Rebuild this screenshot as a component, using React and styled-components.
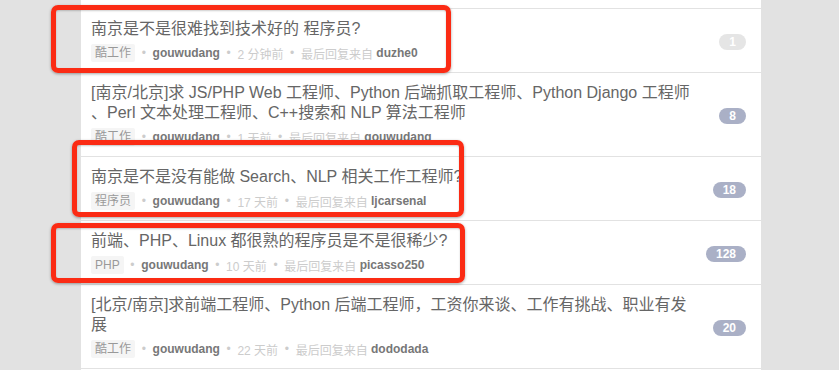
import React from "react";
import styled, { createGlobalStyle } from "styled-components";

const Global = createGlobalStyle`
  html, body { margin: 0; padding: 0; background: #e2e2e2; }
  body { font-family: "Liberation Sans", "Noto Sans CJK SC", sans-serif; }
`;

const Page = styled.div`
  position: relative;
  width: 839px;
  height: 370px;
  overflow: hidden;
  background: #e2e2e2;
`;

const Main = styled.div`
  margin-left: 81px;
  width: 680px;
  min-height: 370px;
  background: #fff;
`;

const Spacer = styled.div`
  height: 8px;
  border-bottom: 1px solid #e2e2e2;
`;

const Cell = styled.div`
  display: grid;
  grid-template-columns: 610px 1fr;
  align-items: center;
  padding: 10px;
  border-bottom: 1px solid #e2e2e2;
`;

const Body = styled.div`
  display: flex;
  flex-direction: column;
  gap: 5px;
`;

const Title = styled.div`
  font-size: 16px;
  line-height: 20px;
  color: #666;
  line-break: anywhere;
`;

const Meta = styled.div`
  display: flex;
  align-items: center;
  height: 18px;
  font-size: 12px;
  color: #ccc;
  white-space: nowrap;
`;

const Tag = styled.span`
  display: inline-block;
  font-size: 12px;
  line-height: 12px;
  padding: 3px 4px;
  background: #f5f5f5;
  color: #999;
  border-radius: 2px;
`;

const Dot = styled.span`
  color: #ccc;
`;

const User = styled.strong`
  font-weight: bold;
  color: #777;
`;

const Light = styled.span`
  color: #ccc;
`;

const CountCol = styled.div`
  justify-self: end;
  margin-right: 5px;
`;

const Count = styled.span`
  display: inline-block;
  padding: 2px 10px;
  line-height: 12px;
  font-size: 12px;
  font-weight: bold;
  color: #fff;
  background: ${(p) => (p.$read ? "#e5e5e5" : "#aab0c6")};
  border-radius: 12px;
`;

const Mark = styled.div`
  position: absolute;
  left: ${(p) => p.$x}px;
  top: ${(p) => p.$y}px;
  width: ${(p) => p.$w}px;
  height: ${(p) => p.$h}px;
  box-sizing: border-box;
  border: 5px solid #fb2b14;
  border-radius: 7px;
  box-shadow: 0 1px 3px rgba(0, 0, 0, 0.35), inset 0 1px 2px rgba(0, 0, 0, 0.2);
  pointer-events: none;
`;

const topics = [
  {
    title: "南京是不是很难找到技术好的 程序员?",
    node: "酷工作",
    time: "2 分钟前",
    last: "duzhe0",
    count: 1,
    read: true,
  },
  {
    title:
      "[南京/北京]求 JS/PHP Web 工程师、Python 后端抓取工程师、Python Django 工程师、Perl 文本处理工程师、C++搜索和 NLP 算法工程师",
    node: "酷工作",
    time: "1 天前",
    last: "gouwudang",
    count: 8,
  },
  {
    title: "南京是不是没有能做 Search、NLP 相关工作工程师?",
    node: "程序员",
    time: "17 天前",
    last: "ljcarsenal",
    count: 18,
  },
  {
    title: "前端、PHP、Linux 都很熟的程序员是不是很稀少?",
    node: "PHP",
    time: "10 天前",
    last: "picasso250",
    count: 128,
  },
  {
    title:
      "[北京/南京]求前端工程师、Python 后端工程师，工资你来谈、工作有挑战、职业有发展",
    node: "酷工作",
    time: "22 天前",
    last: "dododada",
    count: 20,
  },
];

const sep = "\u00a0\u00a0•\u00a0\u00a0";

export default function App() {
  return (
    <Page>
      <Global />
      <Main>
        <Spacer />
        {topics.map((t, i) => (
          <Cell key={i}>
            <Body>
              <Title>{t.title}</Title>
              <Meta>
                <Tag>{t.node}</Tag>
                <Dot>{sep}</Dot>
                <User>gouwudang</User>
                <Dot>{sep}</Dot>
                <Light>{t.time}</Light>
                <Dot>{sep}</Dot>
                <Light>最后回复来自&nbsp;</Light>
                <User>{t.last}</User>
              </Meta>
            </Body>
            <CountCol>
              <Count $read={t.read}>{t.count}</Count>
            </CountCol>
          </Cell>
        ))}
      </Main>
      <Mark $x={51} $y={5} $w={400} $h={68} />
      <Mark $x={72} $y={140} $w={392} $h={77} />
      <Mark $x={51} $y={223} $w={414} $h={60} />
    </Page>
  );
}
